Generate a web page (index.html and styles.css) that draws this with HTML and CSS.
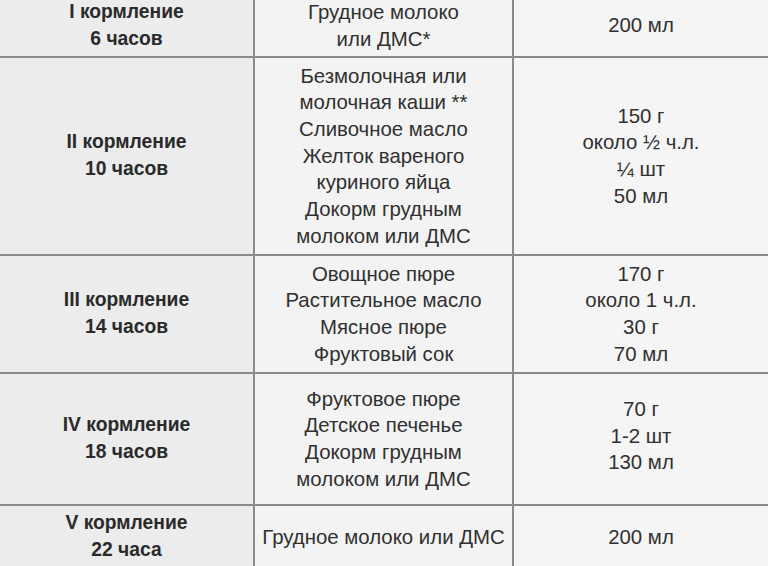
FILE: index.html
```html
<!DOCTYPE html>
<html lang="ru">
<head>
<meta charset="utf-8">
<link rel="stylesheet" href="styles.css">
</head>
<body>
<div class="table">
  <div class="cell c1 r1"><div>I кормление</div><div>6 часов</div></div>
  <div class="cell c2 r1"><div>Грудное молоко</div><div>или ДМС*</div></div>
  <div class="cell c3 r1"><div>200 мл</div></div>

  <div class="cell c1 r2"><div>II кормление</div><div>10 часов</div></div>
  <div class="cell c2 r2"><div>Безмолочная или</div><div>молочная каши **</div><div>Сливочное масло</div><div>Желток вареного</div><div>куриного яйца</div><div>Докорм грудным</div><div>молоком или ДМС</div></div>
  <div class="cell c3 r2"><div>150 г</div><div>около ½ ч.л.</div><div>¼ шт</div><div>50 мл</div></div>

  <div class="cell c1 r3"><div>III кормление</div><div>14 часов</div></div>
  <div class="cell c2 r3"><div>Овощное пюре</div><div>Растительное масло</div><div>Мясное пюре</div><div>Фруктовый сок</div></div>
  <div class="cell c3 r3"><div>170 г</div><div>около 1 ч.л.</div><div>30 г</div><div>70 мл</div></div>

  <div class="cell c1 r4"><div>IV кормление</div><div>18 часов</div></div>
  <div class="cell c2 r4"><div>Фруктовое пюре</div><div>Детское печенье</div><div>Докорм грудным</div><div>молоком или ДМС</div></div>
  <div class="cell c3 r4 up"><div>70 г</div><div>1-2 шт</div><div>130 мл</div></div>

  <div class="cell c1 r5"><div>V кормление</div><div>22 часа</div></div>
  <div class="cell c2 r5"><div>Грудное молоко или ДМС</div></div>
  <div class="cell c3 r5"><div>200 мл</div></div>
</div>
</body>
</html>
```
FILE: styles.css
```css
html, body {
  margin: 0;
  padding: 0;
  background: #f4f4f4;
  overflow: hidden;
}
.table {
  display: grid;
  grid-template-columns: 255px 259px 254px;
  grid-template-rows: 63px 198px 118px 132px 64px;
  margin-top: -5px;
  font-family: "Liberation Sans", Arial, sans-serif;
  font-size: 20.4px;
  line-height: 26.7px;
  color: #303030;
}
.cell {
  display: flex;
  flex-direction: column;
  align-items: center;
  justify-content: center;
  text-align: center;
  border-bottom: 2px solid #8a8a8a;
  box-sizing: border-box;
}
.c1 {
  background: #ececec;
  border-right: 2px solid #8a8a8a;
  font-size: 19.3px;
  font-weight: bold;
  color: #2a2a2a;
}
.c2 {
  background: #f3f3f3;
  border-right: 2px solid #8a8a8a;
}
.c3 {
  background: #f5f5f5;
}
.up {
  padding-bottom: 6px;
}
```
